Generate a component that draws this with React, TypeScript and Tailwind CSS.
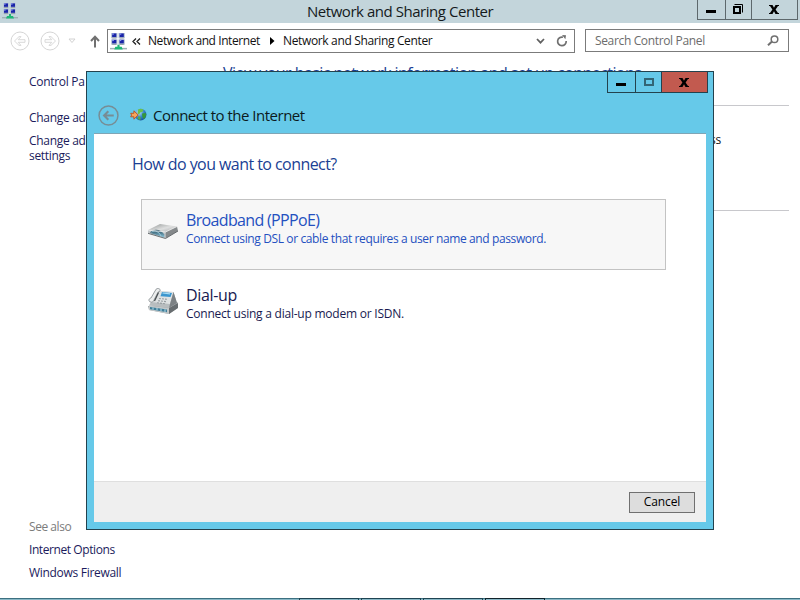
import type { ReactNode } from "react";

function NetworkIcon({ size }: { size: number }) {
  return (
    <svg width={size} height={size} viewBox="0 0 16 16" className="shrink-0">
      {[[2, 0], [9, 0], [2, 6], [9, 6]].map(([x, y]) => (
        <g key={`${x}-${y}`}>
          <rect x={x - 1} y={y} width="6" height="5" fill="#b9c6d6" />
          <rect x={x} y={y + 0.4} width="4" height="3.4" fill="#1a24a8" />
          <rect x={x} y={y + 0.4} width="1.6" height="1.2" fill="#8f9df0" />
          <rect x={x} y={y + 4.2} width="4" height="0.9" fill="#8d98a4" />
        </g>
      ))}
      <rect x="0" y="14" width="16" height="1.4" fill="#9fb0b6" />
      <path d="M7 11h2v2h2l1 2.6H4L5 13h2z" fill="#1fb776" />
    </svg>
  );
}

function CircleArrow({ flip, color, size, width }: { flip?: boolean; color: string; size: number; width: number }) {
  return (
    <svg width={size} height={size} viewBox="0 0 20 20" fill="none" stroke={color} className={flip ? "-scale-x-100 shrink-0" : "shrink-0"}>
      <circle cx="10" cy="10" r="9" strokeWidth={width > 2 ? 1.4 : 1} />
      {width > 2 ? (
        <path d="M15 10H6.5M9.8 6L5.8 10l4 4" strokeWidth="2" />
      ) : (
        <path d="M4.5 10L9 5.6h2L8.2 8.7H15v2.6H8.2l2.8 3.1H9z" strokeWidth="0.9" />
      )}
    </svg>
  );
}

function GlobeIcon() {
  return (
    <svg width="17" height="14" viewBox="0 0 17 14" className="shrink-0">
      <defs>
        <radialGradient id="globe" cx="0.35" cy="0.3" r="0.8">
          <stop offset="0" stopColor="#c9e8fa" />
          <stop offset="0.5" stopColor="#3b8bd0" />
          <stop offset="1" stopColor="#124a8e" />
        </radialGradient>
      </defs>
      <circle cx="10.6" cy="6.6" r="5.9" fill="url(#globe)" />
      <path d="M8 1.5c2-1 4-.8 5.5.2l-1 2.1-2.3.6-1 2-1.6-.8z" fill="#6cc04a" />
      <path d="M12 5.5l3.8-.6c.9 2-.2 4.7-1.9 6l-1.5-1.8z" fill="#35983a" />
      <path d="M8.5 8l2.2 1.2-.4 2.8-2.6-1z" fill="#55ad42" />
      <path d="M.7 5.3h3.2V2.8L8.2 7l-4.3 4.2V8.8H.7l.9-1.7z" fill="#f6a55c" stroke="#b8501e" strokeWidth="0.9" />
    </svg>
  );
}

function ModemIcon() {
  return (
    <svg width="32" height="18" viewBox="0 0 32 18" className="shrink-0">
      <defs>
        <linearGradient id="lid" x1="0" y1="0" x2="1" y2="1">
          <stop offset="0" stopColor="#909493" />
          <stop offset="0.55" stopColor="#dedfdf" />
          <stop offset="1" stopColor="#a6a9aa" />
        </linearGradient>
        <linearGradient id="glass" x1="0" y1="0" x2="0" y2="1">
          <stop offset="0" stopColor="#244b5c" />
          <stop offset="1" stopColor="#8fc7dd" />
        </linearGradient>
      </defs>
      <path d="M1 8L13 2 30 4.5 18.500 10z" fill="url(#lid)" />
      <path d="M1 8l17.500 2v6.300L1 11z" fill="#c3c7c9" />
      <path d="M18.500 10L30 4.500 31 9 18.500 16.300z" fill="#85898b" />
      <path d="M3 11C5 6.500 14 6.500 17.300 12.600v3z" fill="url(#glass)" />
      <path d="M4.500 10C8 8 12 9.500 14 14" fill="none" stroke="#a9d7e8" strokeWidth="0.8" />
      <path d="M1 8l17.500 2L30 4.500" fill="none" stroke="#f0f0f0" strokeWidth="0.8" />
      <path d="M1 11.300l17.500 5.200L31 9" fill="none" stroke="#5a6062" strokeWidth="0.9" />
    </svg>
  );
}

function FaxIcon() {
  return (
    <svg width="32" height="28" viewBox="0 0 32 28" className="shrink-0">
      <path d="M1 18l20-1 9.500-3v6L22 26 2 22z" fill="#9da3a5" />
      <path d="M2 17.500L22 20v6L2 22z" fill="#c3c8ca" />
      <path d="M3 19l17 2.500v2.700L3 21.300z" fill="#3f7f9a" />
      <path d="M6 19.500v2.200M10 20v2.300M14 20.600v2.400M18 21.300V24" stroke="#b7deed" strokeWidth="1" />
      <path d="M22 20l9-5v5l-9 6z" fill="#686d70" />
      <path d="M4 14L9 3l17.500 1L30 15l-8 5L2 17.500z" fill="#b8bdbf" />
      <path d="M9 3l17.500 1-3.500 12L4 14z" fill="#dfe2e3" />
      <path d="M26.500 4L30 15l-8 5 1-4z" fill="#7c8184" />
      <path d="M15 4l10 1-1.500 4-10-.8z" fill="#3c96ce" />
      <path d="M15.500 5l7.500.8" stroke="#a9dcf3" strokeWidth="1.200" />
      <path d="M12 10.500l9 .9M11 12.700l9 1M10 14.800l9 1" stroke="#969da0" strokeWidth="1.100" strokeDasharray="2 1" />
      <path d="M9.500.8c2-1 4.500.5 3.500 2.200l-2 1.200L6.500 13c-.6 1.700-4 1.600-4.500-.3-.4-1.600 1-2.600 2-2.700L8 3z" fill="#eceeee" stroke="#81888b" strokeWidth="0.800" />
      <path d="M11.500 4.500L7.500 13" stroke="#444a4d" strokeWidth="1.200" />
    </svg>
  );
}

function CloseGlyph() {
  return (
    <svg width="10" height="9" viewBox="0 0 10 9" fill="#000">
      <path d="M0 0h3.500L5 2.700 6.500 0H10v1H9L6.600 4.500 9 8h1v1H6.500L5 6.300 3.500 9H0V8h1l2.400-3.500L1 1H0z" />
    </svg>
  );
}

function SideText({ className, children }: { className: string; children: ReactNode }) {
  return <div className={`whitespace-nowrap text-[12px] leading-[15px] ${className}`}>{children}</div>;
}

function TitleBar() {
  return (
    <div className="relative flex h-[23px] items-start justify-end bg-[#c3d5db]">
      <div className="absolute top-[3px] left-[2px]"><NetworkIcon size={16} /></div>
      <div className="absolute top-0 left-[307px] text-[15px] leading-[23px] tracking-[-0.46px] whitespace-nowrap text-[#141a1c]">
        Network and Sharing Center
      </div>
      <div className="mr-[2px] flex h-5 border border-t-0 border-[#5d686c]">
        <div className="flex w-[28px] justify-center border-r border-[#5d686c] pt-[10px] pr-[1px]"><div className="h-[3px] w-[10px] bg-black" /></div>
        <div className="flex w-[26px] justify-center border-r border-[#5d686c] pt-1 pr-[2px]">
          <svg width="11" height="11" viewBox="0 0 11 11" fill="none" stroke="#000">
            <rect x="2" y="3" width="6" height="6" strokeWidth="2" />
            <path d="M2.500.5h8v8" />
          </svg>
        </div>
        <div className="flex w-[45px] justify-center pt-[5px] pr-[1px]"><CloseGlyph /></div>
      </div>
    </div>
  );
}

function AddressRow() {
  return (
    <div className="flex h-[30px] items-start pt-[6px] text-[12px]">
      <div className="flex h-6 w-[107px] shrink-0 items-center pl-[10px]">
        <CircleArrow color="#d5d5d5" size={20} width={1} />
        <div className="w-[10px]" />
        <CircleArrow flip color="#d5d5d5" size={20} width={1} />
        <svg width="8" height="6" viewBox="0 0 8 6" className="ml-[8px]" fill="none" stroke="#d2d2d2"><path d="M1 1h6L4 4.500z" /></svg>
        <svg width="10" height="13" viewBox="0 0 10 13" className="ml-[14px]" fill="none" stroke="#707070" strokeWidth="2"><path d="M5 12.500V2M1 6l4-4.300L9 6" /></svg>
      </div>
      <div className="flex h-6 w-[468px] shrink-0 items-center border border-[#7b7b7b] pl-[2px]">
        <NetworkIcon size={17} />
        <svg width="9" height="7" viewBox="0 0 9 7" className="ml-[5px]" fill="none" stroke="#222" strokeWidth="1.300"><path d="M4 .5l-3 3 3 3M8 .5l-3 3 3 3" /></svg>
        <div className="ml-[7px] w-[122px] shrink-0 tracking-[-0.43px] whitespace-nowrap text-[#111]">Network and Internet</div>
        <svg width="5" height="8" viewBox="0 0 5 8"><path d="M0 0l4.500 4L0 8z" /></svg>
        <div className="ml-[8px] w-[252px] tracking-[-0.35px] whitespace-nowrap text-[#111]">Network and Sharing Center</div>
        <svg width="9" height="6" viewBox="0 0 9 6" className="ml-[1px]" fill="none" stroke="#606060" strokeWidth="1.700"><path d="M1 1l3.500 3.700L8 1" /></svg>
        <svg width="12" height="12" viewBox="0 0 12 12" className="ml-[11px]" fill="none" stroke="#707070" strokeWidth="1.700"><path d="M7 2.200A4.300 4.300 0 1 0 10.200 6" /><path d="M6 0l4 .2-.6 4z" fill="#707070" stroke="none" /></svg>
      </div>
      <div className="ml-[10px] flex h-[23px] w-[204px] items-center justify-between border border-[#7b7b7b] pr-[9px] pl-[9px] text-[#6c6c6c]">
        <span className="tracking-[-0.35px] whitespace-nowrap">Search Control Panel</span>
        <svg width="12" height="11" viewBox="0 0 12 11" fill="none" stroke="#707070"><circle cx="7.500" cy="4.200" r="3.300" strokeWidth="1.500" /><path d="M5 6.500L1 10.300" strokeWidth="2" /></svg>
      </div>
    </div>
  );
}

function Dialog() {
  return (
    <div className="absolute top-[71px] left-[86px] flex h-[459px] w-[628px] flex-col border border-[#23424e] bg-[#66c9e9] px-[7px] pb-[7px]">
      <div className="flex h-[21px] justify-end">
        <div className="-mr-[2px] flex h-[21px] border border-t-0 border-[#23424e]">
          <div className="flex w-[28px] justify-center border-r border-[#23424e] pt-[11px] pr-[1px]"><div className="h-[3px] w-[10px] bg-black" /></div>
          <div className="flex w-[26px] justify-center border-r border-[#23424e] pt-[6px]"><div className="h-[8px] w-[10px] border-2 border-[#336575]" /></div>
          <div className="flex w-[45px] justify-center bg-[#c25a4f] pt-[6px] pr-[1px]"><CloseGlyph /></div>
        </div>
      </div>
      <div className="flex h-[41px] items-center border-b border-[#7fa5b5] pt-[4px] pl-[4px]">
        <CircleArrow color="#778d95" size={21} width={3} />
        <div className="w-[11px]" />
        <GlobeIcon />
        <div className="ml-[6px] text-[15px] leading-5 tracking-[-0.5px] whitespace-nowrap text-[#0c1a20]">Connect to the Internet</div>
      </div>
      <div className="flex-1 bg-white pt-[19px] pl-[38px]">
        <div className="text-[16px] leading-[22px] tracking-[-0.56px] whitespace-nowrap text-[#1b3f94]">How do you want to connect?</div>
        <div className="mt-[24px] ml-[9px] flex h-[71px] w-[525px] border border-[#c3c3c3] bg-[#f7f7f7] pt-[9px] pl-[5px] text-[#2450c0]">
          <div className="w-[39px] pt-[13px]"><ModemIcon /></div>
          <div className="whitespace-nowrap">
            <div className="text-[16px] leading-[22px] tracking-[-0.66px]">Broadband (PPPoE)</div>
            <div className="text-[12px] leading-[15px] tracking-[-0.38px]">Connect using DSL or cable that requires a user name and password.</div>
          </div>
        </div>
        <div className="mt-[14px] ml-[15px] flex text-[#181a50]">
          <div className="w-[39px] pt-[4px]"><FaxIcon /></div>
          <div className="whitespace-nowrap">
            <div className="text-[16px] leading-[22px] tracking-[-0.35px]">Dial-up</div>
            <div className="text-[12px] leading-[15px] tracking-[-0.23px]">Connect using a dial-up modem or ISDN.</div>
          </div>
        </div>
      </div>
      <div className="flex h-[41px] items-center justify-end border-t border-[#dfdfdf] bg-[#efefef] pr-[11px]">
        <button className="h-[21px] w-[66px] border border-[#707070] bg-[#dddddd] pb-[2px] text-[12px] leading-[17px] tracking-[-0.1px] text-black">Cancel</button>
      </div>
    </div>
  );
}

export default function App() {
  return (
    <div className="relative flex h-[600px] w-[800px] flex-col overflow-hidden bg-white font-['Open_Sans',sans-serif]">
      <TitleBar />
      <AddressRow />
      <div className="flex flex-1 text-[#1b1b5c]">
        <nav className="flex w-[223px] flex-col pt-[21px] pl-[29px] tracking-[-0.3px]">
          <SideText className="">Control Pa</SideText>
          <SideText className="mt-[21px]">Change ad</SideText>
          <SideText className="mt-[8px]">Change ad<br />settings</SideText>
          <SideText className="mt-auto tracking-[-0.45px] text-[#7c7c7c]">See also</SideText>
          <SideText className="mt-[8px] tracking-[-0.42px]">Internet Options</SideText>
          <SideText className="mt-[8px] mb-[18px]">Windows Firewall</SideText>
        </nav>
        <main className="mr-[11px] flex-1">
          <div className="h-[53px] border-b border-[#c8c8cc] pt-[9px] text-[16px] leading-[22px] tracking-[-0.56px] whitespace-nowrap text-[#1b3f94]">
            View your basic network information and set up connections
          </div>
          <div className="flex h-[105px] items-start justify-end border-b border-[#c8c8cc] pt-[26px] pr-[68px] text-[12px] leading-[15px] tracking-[-0.25px] text-[#111]">ss</div>
        </main>
      </div>
      <div className="flex h-[2px] border-t border-[#3d7080] bg-[#8ab8c6] pl-[299px]">
        <div className="-mt-px h-[2px] w-[60px] border border-b-0 border-[#1f4452]" />
        <div className="-mt-px ml-[2px] h-[2px] w-[60px] border border-b-0 border-[#1f4452]" />
        <div className="-mt-px ml-[2px] h-[2px] w-[60px] border border-b-0 border-[#1f4452]" />
        <div className="-mt-px ml-[2px] h-[2px] w-[60px] border border-b-0 border-[#10222a]" />
      </div>
      <Dialog />
    </div>
  );
}
